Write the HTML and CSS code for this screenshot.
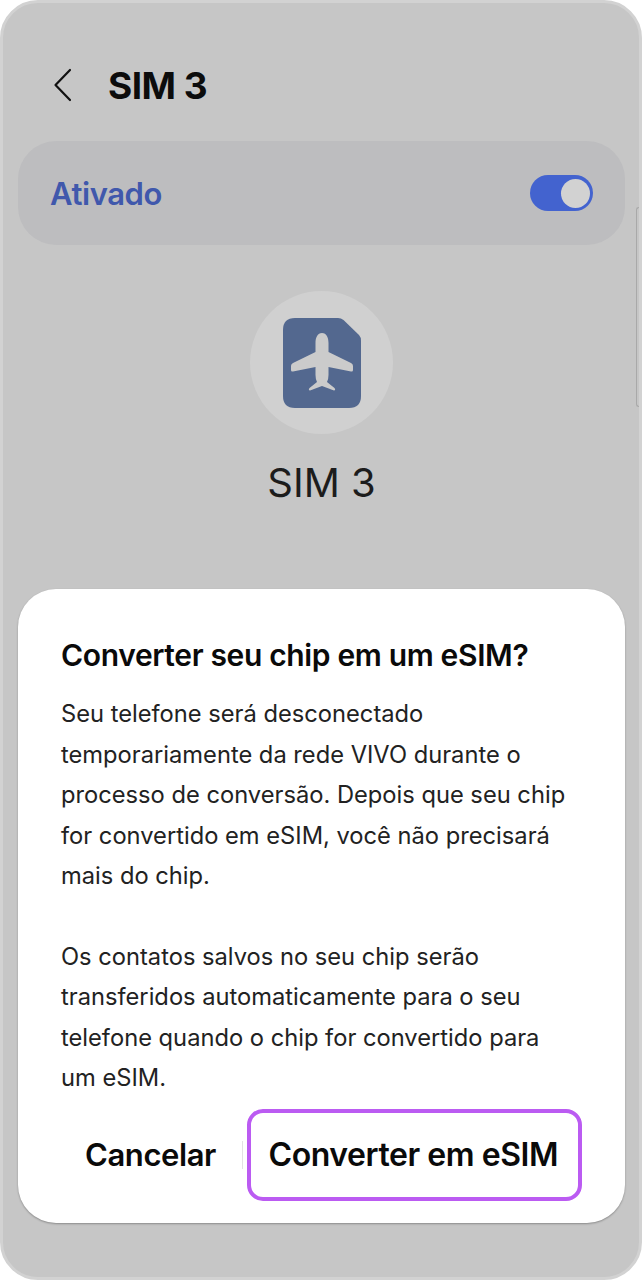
FILE: index.html
```html
<!DOCTYPE html>
<html lang="pt-BR">

<head>
    <meta charset="UTF-8">
    <meta name="viewport" content="width=device-width, initial-scale=1.0">
    <title>SIM 3</title>
    <link rel="stylesheet" href="styles.css">
</head>

<body>
    <div class="phone">
        <div class="topbar">
            <svg class="back" width="20" height="34" viewBox="0 0 20 34">
                <path d="M18 2 L3.5 17 L18 32" fill="none" stroke="#111" stroke-width="2.2" stroke-linecap="round" stroke-linejoin="round" />
            </svg>
            <h1>SIM 3</h1>
        </div>

        <div class="status-card">
            <span class="status-label">Ativado</span>
            <div class="switch">
                <div class="knob"></div>
            </div>
        </div>

        <div class="sim-info">
            <div class="sim-circle">
                <svg width="78" height="90" viewBox="0 0 78 90">
                    <path d="M12 0 H55 Q58 0 60.5 2 L76 17 Q78 19 78 23 V78 Q78 90 66 90 H12 Q0 90 0 78 V12 Q0 0 12 0 Z" fill="#53688f" />
                    <path d="M39 15 C43.5 15 45.5 19.5 45.5 25 V34 L68 45 Q70 46 70 48 V52 Q70 54 68 53.5 L45.5 49 V57 Q45.5 61 44 64 L51.5 70 Q53 72 51 72.5 L39 68 L27 72.5 Q25 72 26.5 70 L34 64 Q32.5 61 32.5 57 V49 L10 53.5 Q8 54 8 52 V48 Q8 46 10 45 L32.5 34 V25 C32.5 19.5 34.5 15 39 15 Z" fill="#cbcbcb" />
                </svg>
            </div>
            <div class="sim-name">SIM 3</div>
        </div>

        <div class="scroll-thumb"></div>

        <div class="dialog">
            <h2>Converter seu chip em um eSIM?</h2>
            <p>Seu telefone será desconectado<br>temporariamente da rede VIVO durante o<br>processo de conversão. Depois que seu chip<br>for convertido em eSIM, você não precisará<br>mais do chip.</p>
            <p>Os contatos salvos no seu chip serão<br>transferidos automaticamente para o seu<br>telefone quando o chip for convertido para<br>um eSIM.</p>
            <div class="actions">
                <div class="btn btn-cancel">Cancelar</div>
                <div class="divider"></div>
                <div class="btn btn-convert">Converter em eSIM</div>
            </div>
        </div>
    </div>
</body>

</html>
```

FILE: styles.css
```css
* {
    margin: 0;
    padding: 0;
    box-sizing: border-box;
}

html,
body {
    height: 100%;
}

body {
    background: #fff;
    font-family: Inter, "Noto Sans", sans-serif;
    color: #111;
}

.phone {
    position: relative;
    width: 642px;
    height: 1280px;
    padding: 0 14px 0 15px;
    background: #c6c6c6;
    border: 3px solid #d2d2d2;
    border-radius: 38px;
    overflow: hidden;
}

.topbar {
    display: flex;
    align-items: center;
    gap: 36px;
    height: 138px;
    padding: 26px 0 0 34px;
}

.back {
    flex-shrink: 0;
}

.topbar h1 {
    font-size: 37px;
    font-weight: 700;
    letter-spacing: -0.5px;
    color: #0c0c0c;
}

.status-card {
    display: flex;
    align-items: center;
    justify-content: space-between;
    height: 104px;
    padding: 0 32px 0 32px;
    background: #bdbdbf;
    border-radius: 38px;
}

.status-label {
    font-size: 31px;
    font-weight: 600;
    letter-spacing: -0.4px;
    color: #4058ac;
}

.switch {
    display: flex;
    justify-content: flex-end;
    align-items: center;
    width: 63px;
    height: 36px;
    padding: 0 3px;
    background: #4363cf;
    border-radius: 18px;
}

.knob {
    width: 29px;
    height: 29px;
    background: #d2d2d2;
    border-radius: 50%;
}

.sim-info {
    display: flex;
    flex-direction: column;
    align-items: center;
    padding-top: 46px;
}

.sim-circle {
    display: flex;
    align-items: center;
    justify-content: center;
    width: 143px;
    height: 143px;
    background: #d0d0d0;
    border-radius: 50%;
}

.sim-name {
    margin-top: 24px;
    font-size: 40px;
    font-weight: 400;
    color: #1c1c1c;
}

.scroll-thumb {
    position: absolute;
    top: 204px;
    right: 0;
    width: 3px;
    height: 200px;
    border: 1px solid #a9a9a9;
    border-right: 0;
    border-radius: 4px 0 0 4px;
}

.dialog {
    margin-top: 82px;
    height: 634px;
    padding: 48px 43px 0;
    background: #fff;
    border-radius: 38px;
    box-shadow: 0 1px 2px rgba(0, 0, 0, 0.3);
}

.dialog h2 {
    font-size: 30px;
    font-weight: 600;
    letter-spacing: -0.35px;
    line-height: 36px;
    color: #0a0a0a;
    margin-bottom: 21px;
}

.dialog p {
    font-size: 23.7px;
    font-weight: 400;
    line-height: 40.5px;
    color: #222;
    margin-bottom: 40px;
}

.dialog p:last-of-type {
    margin-bottom: 0;
}

.actions {
    display: flex;
    align-items: center;
    margin-top: 10px;
}

.btn {
    font-weight: 600;
    color: #0a0a0a;
}

.btn-cancel {
    margin-left: 24px;
    width: 157px;
    font-size: 31px;
    letter-spacing: -0.4px;
}

.divider {
    width: 1px;
    height: 28px;
    background: #e2e2e2;
}

.btn-convert {
    display: flex;
    align-items: center;
    justify-content: center;
    margin-left: 4px;
    width: 336px;
    height: 92px;
    padding-right: 2px;
    font-size: 32px;
    letter-spacing: -0.45px;
    border: 4px solid #bb5bf2;
    border-radius: 16px;
}
```
